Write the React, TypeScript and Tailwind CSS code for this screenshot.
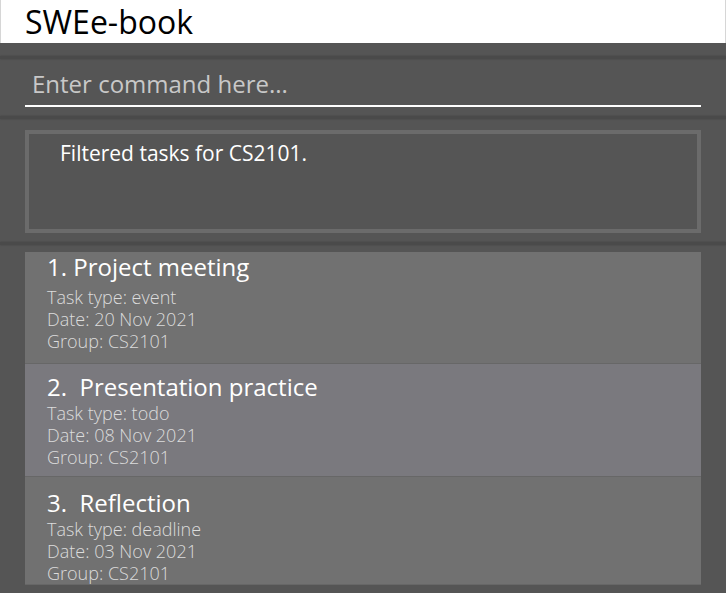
const tasks = [
  { title: '1. Project meeting', type: 'event', date: '20 Nov 2021', group: 'CS2101', box: 'bg-[#717171] h-[112px] pt-[1px]', head: 'leading-[28px]', gap: 'mt-[5px]' },
  { title: '2.\u00a0 Presentation practice', type: 'todo', date: '08 Nov 2021', group: 'CS2101', box: 'bg-[#7a797e] h-[113px] pt-[8px]', head: 'leading-[30px]', gap: 'mt-0' },
  { title: '3.\u00a0 Reflection', type: 'deadline', date: '03 Nov 2021', group: 'CS2101', box: 'bg-[#717171] h-[108px] pt-[11px]', head: 'leading-[30px]', gap: 'mt-0' },
];

function Separator() {
  return <div className="h-[3px] bg-[#4a4a4a] shadow-[0_0_2px_rgba(0,0,0,0.25)]" />;
}

export default function App() {
  return (
    <div className="w-[726px] h-[593px] overflow-hidden bg-[#555555] font-['Open_Sans',sans-serif]">
      {/* Title bar */}
      <div className="h-[43px] bg-white border-x border-[#d6d6d6] pl-[24px] flex items-center">
        <span className="text-[32px] leading-none text-black">SWEe-book</span>
      </div>

      <div className="h-[13px]" />
      <Separator />

      {/* Command box */}
      <div className="h-[57px] px-[25px] flex flex-col justify-end">
        <div className="border-b-2 border-white pl-[7px] pb-[6px]">
          <span className="text-[24px] leading-none text-[#c8c8c8]">Enter command here...</span>
        </div>
        <div className="h-[9px]" />
      </div>
      <Separator />

      {/* Result display */}
      <div className="h-[123px] pt-[11px] px-[25px]">
        <div className="h-[103px] border-4 border-[#6b6b6b] pl-[31px] pt-[9px]">
          <span className="text-[21px] leading-none text-white">Filtered tasks for CS2101.</span>
        </div>
      </div>
      <Separator />

      {/* Task list */}
      <div className="pt-[7px] px-[25px]">
        {tasks.map((t, i) => (
          <div key={i} className={`${t.box} border-b border-[#676767] pl-[22px]`}>
            <div className={`${t.head} text-[24px] text-white`}>{t.title}</div>
            <div className={`${t.gap} text-[18px] font-light leading-[22px] text-[#dcdcdc]`}>
              <div>Task type: {t.type}</div>
              <div>Date: {t.date}</div>
              <div>Group: {t.group}</div>
            </div>
          </div>
        ))}
      </div>
    </div>
  );
}
